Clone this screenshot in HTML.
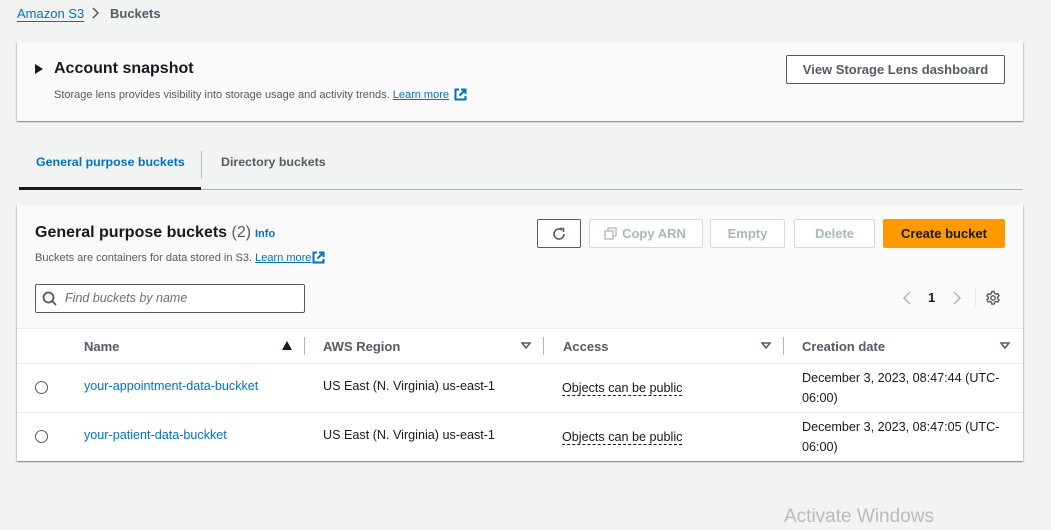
<!DOCTYPE html>
<html><head><style>
*{margin:0;padding:0;box-sizing:border-box}
body{width:1051px;height:530px;background:#f2f3f3;font-family:"Liberation Sans",sans-serif;position:relative;overflow:hidden;color:#16191f}
.a{position:absolute;white-space:nowrap}
.card{position:absolute;background:#fff;box-shadow:0 1px 1px rgba(0,28,36,.3),1px 1px 1px rgba(0,28,36,.15),-1px 1px 1px rgba(0,28,36,.15)}
.lnk{color:#0073bb}
.btn{position:absolute;border:1px solid #d5dbdb;background:#fff;color:#aab7b8;font-weight:bold;font-size:13px;text-align:center;line-height:27px;height:29px;border-radius:2px}
.th{font-size:13px;font-weight:bold;color:#545b64}
.sep{position:absolute;width:1px;background:#aab7b8;height:18px}
.row{position:absolute;left:17px;width:1006px;border-top:1px solid #eaeded}
.cell{font-size:12.6px;color:#16191f}
.pub{border-bottom:1px dashed #16191f;font-size:12.6px}
.rad{position:absolute;width:13px;height:13px;border:1.5px solid #545b64;border-radius:50%;background:#fff}
</style></head><body>
<div class="a lnk" style="left:17px;top:6px;font-size:13px;border-bottom:1px solid #0073bb;line-height:15px">Amazon S3</div>
<svg class="a" style="left:90px;top:7px" width="12" height="12" viewBox="0 0 12 12"><path d="M3 1l5 5-5 5" fill="none" stroke="#545b64" stroke-width="1.5"/></svg>
<div class="a" style="left:110px;top:6px;font-size:13px;font-weight:bold;color:#545b64">Buckets</div>

<div class="card" style="left:17px;top:42px;width:1006px;height:79px;background:#fafafa"></div>
<svg class="a" style="left:35px;top:64px" width="8" height="10"><path d="M0 0L8 5L0 10z" fill="#16191f"/></svg>
<div class="a" style="left:54px;top:60px;font-size:16px;font-weight:bold">Account snapshot</div>
<div class="a" style="left:54px;top:89px;font-size:11px;color:#545b64">Storage lens provides visibility into storage usage and activity trends. <span class="lnk" style="text-decoration:underline">Learn more</span></div>
<svg class="a" style="left:454px;top:88px" width="13" height="13" viewBox="0 0 13 13"><path d="M5 1.5H1.5v10h10V8M7 1.5h4.5V6M11.5 1.5L5.5 7.5" fill="none" stroke="#0073bb" stroke-width="2"/></svg>
<div class="a" style="left:786px;top:55px;width:219px;height:29px;border:1px solid #545b64;border-radius:2px;background:#fff;font-size:13px;font-weight:bold;color:#545b64;text-align:center;line-height:27px">View Storage Lens dashboard</div>

<div class="a" style="left:36px;top:155px;font-size:12.4px;font-weight:bold;color:#0073bb">General purpose buckets</div>
<div class="a" style="left:201px;top:151px;width:1px;height:27px;background:#aab7b8"></div>
<div class="a" style="left:221px;top:155px;font-size:12.4px;font-weight:bold;color:#545b64">Directory buckets</div>
<div class="a" style="left:19px;top:189px;width:1004px;height:1px;background:#aab7b8"></div>
<div class="a" style="left:19px;top:187px;width:182px;height:3px;background:#16191f"></div>

<div class="card" style="left:17px;top:205px;width:1006px;height:256px;background:#fafafa"></div>
<div class="a" style="left:35px;top:224px;font-size:16px;font-weight:bold">General purpose buckets <span style="font-weight:normal;color:#545b64">(2)</span></div>
<div class="a lnk" style="left:255px;top:228px;font-size:11px;font-weight:bold">Info</div>
<div class="a" style="left:35px;top:252px;font-size:11px;color:#545b64">Buckets are containers for data stored in S3. <span class="lnk" style="text-decoration:underline">Learn more</span></div>
<svg class="a" style="left:312px;top:251px" width="13" height="13" viewBox="0 0 13 13"><path d="M5 1.5H1.5v10h10V8M7 1.5h4.5V6M11.5 1.5L5.5 7.5" fill="none" stroke="#0073bb" stroke-width="2"/></svg>

<div class="a" style="left:537px;top:219px;width:44px;height:29px;border:1px solid #545b64;border-radius:2px;background:#fff"></div>
<svg class="a" style="left:551px;top:226px" width="16" height="16" viewBox="0 0 16 16"><path d="M13 8A5 5 0 1 1 11 4" fill="none" stroke="#545b64" stroke-width="1.6"/><path d="M9 2.5h3.5V6" fill="none" stroke="#545b64" stroke-width="1.6"/></svg>
<div class="btn" style="left:589px;top:219px;width:114px;padding-left:16px">Copy ARN</div>
<svg class="a" style="left:604px;top:227px" width="13" height="13" viewBox="0 0 13 13"><rect x="1" y="4" width="8" height="8" fill="none" stroke="#aab7b8" stroke-width="1.3"/><path d="M4 4V1h8v8H9" fill="none" stroke="#aab7b8" stroke-width="1.3"/></svg>
<div class="btn" style="left:710px;top:219px;width:75px">Empty</div>
<div class="btn" style="left:794px;top:219px;width:81px">Delete</div>
<div class="a" style="left:883px;top:219px;width:122px;height:29px;background:#ff9900;border-radius:2px;font-size:13px;font-weight:bold;text-align:center;line-height:29px">Create bucket</div>

<div class="a" style="left:35px;top:284px;width:270px;height:29px;border:1px solid #545b64;border-radius:2px;background:#fff"></div>
<svg class="a" style="left:42px;top:291px" width="16" height="16" viewBox="0 0 16 16"><circle cx="6.5" cy="6.5" r="5" fill="none" stroke="#545b64" stroke-width="1.8"/><path d="M10 10l4 4" stroke="#545b64" stroke-width="1.8"/></svg>
<div class="a" style="left:65px;top:291px;font-size:12.5px;font-style:italic;color:#687078">Find buckets by name</div>

<svg class="a" style="left:901px;top:290px" width="12" height="16"><path d="M9 2L3 8l6 6" fill="none" stroke="#aab7b8" stroke-width="1.5"/></svg>
<div class="a" style="left:928px;top:290px;font-size:13px;font-weight:bold">1</div>
<svg class="a" style="left:951px;top:290px" width="12" height="16"><path d="M3 2l6 6-6 6" fill="none" stroke="#aab7b8" stroke-width="1.5"/></svg>
<div class="a" style="left:975px;top:287px;width:1px;height:22px;background:#eaeded"></div>
<svg class="a" style="left:985px;top:290px" width="16" height="16" viewBox="0 0 16 16"><circle cx="8" cy="8" r="2.2" fill="none" stroke="#545b64" stroke-width="1.4"/><path d="M6.8 1.5h2.4l.4 1.8 1.5.9 1.8-.6 1.2 2.1-1.4 1.2v1.8l1.4 1.2-1.2 2.1-1.8-.6-1.5.9-.4 1.8H6.8l-.4-1.8-1.5-.9-1.8.6-1.2-2.1 1.4-1.2V7.1L1.9 5.9l1.2-2.1 1.8.6 1.5-.9z" fill="none" stroke="#545b64" stroke-width="1.4" stroke-linejoin="round"/></svg>

<div class="row" style="top:328px;height:35px;background:#fff"></div>
<div class="a th" style="left:84px;top:339px">Name</div>
<svg class="a" style="left:282px;top:341px" width="10" height="9"><path d="M5 0L10 9H0z" fill="#16191f"/></svg>
<div class="sep" style="left:304px;top:337px"></div>
<div class="a th" style="left:323px;top:339px">AWS Region</div>
<svg class="a" style="left:521px;top:342px" width="10" height="7"><path d="M1 1h8L5 6z" fill="none" stroke="#545b64" stroke-width="1.5"/></svg>
<div class="sep" style="left:543px;top:337px"></div>
<div class="a th" style="left:563px;top:339px">Access</div>
<svg class="a" style="left:761px;top:342px" width="10" height="7"><path d="M1 1h8L5 6z" fill="none" stroke="#545b64" stroke-width="1.5"/></svg>
<div class="sep" style="left:783px;top:337px"></div>
<div class="a th" style="left:802px;top:339px">Creation date</div>
<svg class="a" style="left:1000px;top:342px" width="10" height="7"><path d="M1 1h8L5 6z" fill="none" stroke="#545b64" stroke-width="1.5"/></svg>

<div class="row" style="top:363px;height:49px;background:#fff"></div>
<div class="row" style="top:412px;height:49px;background:#fff"></div>

<div class="rad" style="left:35px;top:381px"></div>
<div class="a lnk" style="left:84px;top:379px;font-size:12.6px">your-appointment-data-buckket</div>
<div class="a cell" style="left:323px;top:379px">US East (N. Virginia) us-east-1</div>
<div class="a" style="left:562px;top:379px"><span class="pub">Objects can be public</span></div>
<div class="a cell" style="left:802px;top:368px;line-height:20px">December 3, 2023, 08:47:44 (UTC-<br>06:00)</div>

<div class="rad" style="left:35px;top:430px"></div>
<div class="a lnk" style="left:84px;top:428px;font-size:12.6px">your-patient-data-buckket</div>
<div class="a cell" style="left:323px;top:428px">US East (N. Virginia) us-east-1</div>
<div class="a" style="left:562px;top:428px"><span class="pub">Objects can be public</span></div>
<div class="a cell" style="left:802px;top:417px;line-height:20px">December 3, 2023, 08:47:05 (UTC-<br>06:00)</div>

<div class="a" style="left:784px;top:506px;font-size:19px;color:#b8babc">Activate Windows</div>
</body></html>
